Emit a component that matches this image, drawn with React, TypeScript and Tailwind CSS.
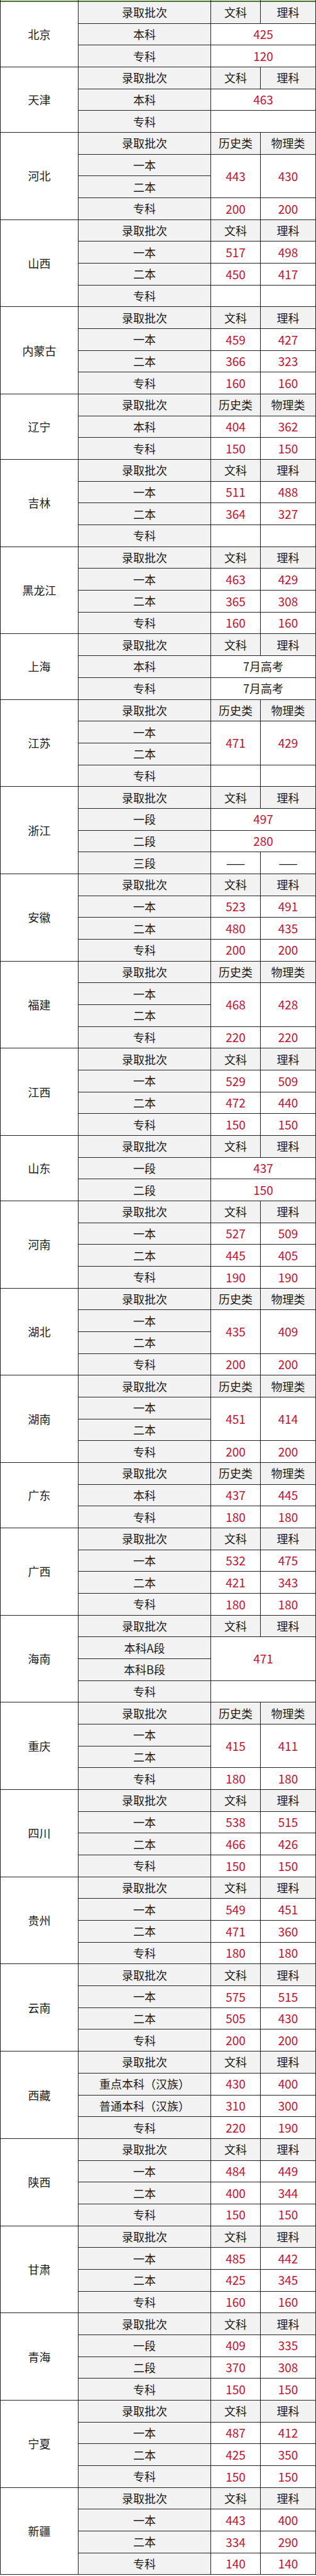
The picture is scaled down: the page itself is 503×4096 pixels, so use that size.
import React from 'react'

type Row =
  | { k: 'pair'; label: string; a: string; b: string }
  | { k: 'wide'; label: string; v: string }
  | { k: 'merge'; labels: [string, string]; a: string; b: string }
  | { k: 'mergeWide'; labels: [string, string]; v: string }

type Province = { name: string; head: 'wl' | 'hw'; rows: Row[] }

const p = (label: string, a: string, b: string): Row => ({ k: 'pair', label, a, b })
const w = (label: string, v: string): Row => ({ k: 'wide', label, v })
const m = (a: string, b: string): Row => ({ k: 'merge', labels: ['一本', '二本'], a, b })

const std = (a1: string, b1: string, a2: string, b2: string, a3: string, b3: string): Row[] => [
  p('一本', a1, b1),
  p('二本', a2, b2),
  p('专科', a3, b3),
]

const provinces: Province[] = [
  { name: '北京', head: 'wl', rows: [w('本科', '425'), w('专科', '120')] },
  { name: '天津', head: 'wl', rows: [w('本科', '463'), w('专科', '')] },
  { name: '河北', head: 'hw', rows: [m('443', '430'), p('专科', '200', '200')] },
  { name: '山西', head: 'wl', rows: std('517', '498', '450', '417', '', '') },
  { name: '内蒙古', head: 'wl', rows: std('459', '427', '366', '323', '160', '160') },
  { name: '辽宁', head: 'hw', rows: [p('本科', '404', '362'), p('专科', '150', '150')] },
  { name: '吉林', head: 'wl', rows: std('511', '488', '364', '327', '', '') },
  { name: '黑龙江', head: 'wl', rows: std('463', '429', '365', '308', '160', '160') },
  { name: '上海', head: 'wl', rows: [w('本科', '7月高考'), w('专科', '7月高考')] },
  { name: '江苏', head: 'hw', rows: [m('471', '429'), p('专科', '', '')] },
  {
    name: '浙江',
    head: 'wl',
    rows: [w('一段', '497'), w('二段', '280'), p('三段', '——', '——')],
  },
  { name: '安徽', head: 'wl', rows: std('523', '491', '480', '435', '200', '200') },
  { name: '福建', head: 'hw', rows: [m('468', '428'), p('专科', '220', '220')] },
  { name: '江西', head: 'wl', rows: std('529', '509', '472', '440', '150', '150') },
  { name: '山东', head: 'wl', rows: [w('一段', '437'), w('二段', '150')] },
  { name: '河南', head: 'wl', rows: std('527', '509', '445', '405', '190', '190') },
  { name: '湖北', head: 'hw', rows: [m('435', '409'), p('专科', '200', '200')] },
  { name: '湖南', head: 'hw', rows: [m('451', '414'), p('专科', '200', '200')] },
  { name: '广东', head: 'hw', rows: [p('本科', '437', '445'), p('专科', '180', '180')] },
  { name: '广西', head: 'wl', rows: std('532', '475', '421', '343', '180', '180') },
  {
    name: '海南',
    head: 'wl',
    rows: [{ k: 'mergeWide', labels: ['本科A段', '本科B段'], v: '471' }, w('专科', '')],
  },
  { name: '重庆', head: 'hw', rows: [m('415', '411'), p('专科', '180', '180')] },
  { name: '四川', head: 'wl', rows: std('538', '515', '466', '426', '150', '150') },
  { name: '贵州', head: 'wl', rows: std('549', '451', '471', '360', '180', '180') },
  { name: '云南', head: 'wl', rows: std('575', '515', '505', '430', '200', '200') },
  {
    name: '西藏',
    head: 'wl',
    rows: [
      p('重点本科（汉族）', '430', '400'),
      p('普通本科（汉族）', '310', '300'),
      p('专科', '220', '190'),
    ],
  },
  { name: '陕西', head: 'wl', rows: std('484', '449', '400', '344', '150', '150') },
  { name: '甘肃', head: 'wl', rows: std('485', '442', '425', '345', '160', '160') },
  {
    name: '青海',
    head: 'wl',
    rows: [p('一段', '409', '335'), p('二段', '370', '308'), p('专科', '150', '150')],
  },
  { name: '宁夏', head: 'wl', rows: std('487', '412', '425', '350', '150', '150') },
  { name: '新疆', head: 'wl', rows: std('443', '400', '334', '290', '140', '140') },
]

const rowCount = (r: Row) => (r.k === 'merge' || r.k === 'mergeWide' ? 2 : 1)

function Label({ text }: { text: string }) {
  return (
    <div className="flex items-center justify-center bg-[#f2f2f2] text-[18px] text-[#1a1a1a]">
      {text}
    </div>
  )
}

function Value({ text, className = '' }: { text: string; className?: string }) {
  const num = /^\d+$/.test(text)
  return (
    <div
      className={`flex items-center justify-center bg-white ${
        num ? 'text-[19px] text-[#c8102e]' : 'text-[18px] text-[#1a1a1a]'
      } ${className}`}
    >
      {text}
    </div>
  )
}

function ProvinceBlock({ prov }: { prov: Province }) {
  const total = 1 + prov.rows.reduce((s, r) => s + rowCount(r), 0)
  const [a, b] = prov.head === 'wl' ? ['文科', '理科'] : ['历史类', '物理类']

  return (
    <>
      <div
        className={`flex items-center justify-center bg-white text-[18px] text-[#1a1a1a] ${
          total === 3 ? 'row-span-3' : 'row-span-4'
        }`}
      >
        {prov.name}
      </div>
      <Label text="录取批次" />
      <Label text={a} />
      <Label text={b} />
      {prov.rows.map((r, i) => {
        if (r.k === 'pair') {
          return (
            <React.Fragment key={i}>
              <Label text={r.label} />
              <Value text={r.a} />
              <Value text={r.b} />
            </React.Fragment>
          )
        }
        if (r.k === 'wide') {
          return (
            <React.Fragment key={i}>
              <Label text={r.label} />
              <Value text={r.v} className="col-span-2" />
            </React.Fragment>
          )
        }
        if (r.k === 'merge') {
          return (
            <React.Fragment key={i}>
              <Label text={r.labels[0]} />
              <Value text={r.a} className="row-span-2" />
              <Value text={r.b} className="row-span-2" />
              <Label text={r.labels[1]} />
            </React.Fragment>
          )
        }
        return (
          <React.Fragment key={i}>
            <Label text={r.labels[0]} />
            <Value text={r.v} className="col-span-2 row-span-2" />
            <Label text={r.labels[1]} />
          </React.Fragment>
        )
      })}
    </>
  )
}

export default function App() {
  return (
    <div className="w-[503px] bg-white font-['Noto_Sans_CJK_SC',sans-serif]">
      <div className="grid grid-cols-[123px_210px_78px_87px] grid-rows-[2px] auto-rows-[33.68px] gap-px bg-[#222] px-px pb-px">
        {/* tail of the green header above */}
        <div className="bg-[#a9d18e]" />
        <div className="bg-[#a9d18e]" />
        <div className="bg-[#a9d18e]" />
        <div className="bg-[#a9d18e]" />

        {provinces.map((prov) => (
          <ProvinceBlock key={prov.name} prov={prov} />
        ))}
      </div>
    </div>
  )
}
